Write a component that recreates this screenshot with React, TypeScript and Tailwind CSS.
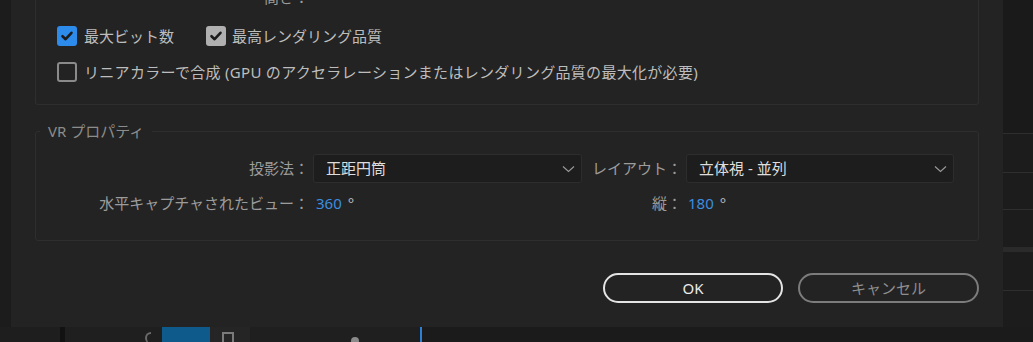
import React from "react"

const font = { fontFamily: '"Noto Sans", "Noto Sans CJK JP", sans-serif' }

function Check({ state }: { state: "blue" | "gray" | "off" }) {
  if (state === "off") {
    return <span className="h-[20px] w-[20px] rounded-[3px] border-2 border-[#8a8a8a]" />
  }
  return (
    <span
      className={`flex h-[20px] w-[20px] items-center justify-center rounded-[3px] ${
        state === "blue" ? "bg-[#2d8ceb]" : "bg-[#b0b0b0]"
      }`}
    >
      <svg width="14" height="14" viewBox="0 0 14 14">
        <path d="M2.5 7.2 L5.6 10.2 L11.5 3.8" fill="none" stroke="#1b1b1b" strokeWidth="2.6" strokeLinecap="round" strokeLinejoin="round" />
      </svg>
    </span>
  )
}

function Select({ value, width }: { value: string; width: string }) {
  return (
    <div className={`flex h-[29px] items-center justify-between rounded-[3px] border border-[#2d2d2d] bg-[#1d1d1d] pl-[12px] pr-[6px] text-[15px] text-[#dedede] ${width}`}>
      <span>{value}</span>
      <svg width="13" height="8" viewBox="0 0 13 8">
        <path d="M1 1.5 L6.5 6.5 L12 1.5" fill="none" stroke="#9a9a9a" strokeWidth="1.1" />
      </svg>
    </div>
  )
}

export default function App() {
  return (
    <div className="flex h-[342px] w-[1033px] flex-col overflow-hidden bg-[#1b1b1b]" style={font}>
      <div className="flex h-[327px]">
        <div className="w-[11px] bg-[#1c1c1c]" />

        {/* dialog */}
        <div className="flex w-[992px] flex-col overflow-hidden bg-[#232323] px-[24px]">
          <div className="-mt-[33px] rounded-b-[3px] border-x border-b border-[#2e2e2e] pb-[22px] pt-[20px]">
            <div className="flex h-[20px] text-[15px] leading-[20px] text-[#9c9c9c]">
              <span className="w-[277px] pr-[4px] text-right">高さ：</span>
            </div>
            <div className="mt-[19px] flex h-[20px] items-center pl-[21px] text-[15px] text-[#bdbdbd]">
              <Check state="blue" />
              <span className="ml-[7px]">最大ビット数</span>
              <span className="ml-[32px]" />
              <Check state="gray" />
              <span className="ml-[6px]">最高レンダリング品質</span>
            </div>
            <div className="mt-[16px] flex h-[20px] items-center pl-[21px] text-[15px] text-[#bdbdbd]">
              <Check state="off" />
              <span className="ml-[7px] tracking-[0.3px]">リニアカラーで合成 (GPU のアクセラレーションまたはレンダリング品質の最大化が必要)</span>
            </div>
          </div>

          <fieldset className="mt-[16px] rounded-[3px] border border-[#2e2e2e]">
            <legend className="ml-[4px] px-[8px] text-[15px] leading-[20px] text-[#8c8c8c]">VR プロパティ</legend>
            <div className="grid grid-cols-[277px_269px_104px_268px] gap-y-[10px] pb-[27px] pt-[13px] text-[15px]">
              <div className="flex items-center justify-end pr-[4px] text-[#9c9c9c]">投影法：</div>
              <Select value="正距円筒" width="w-[269px]" />
              <div className="flex items-center justify-end pr-[4px] text-[#9c9c9c]">レイアウト：</div>
              <Select value="立体視 - 並列" width="w-[268px]" />

              <div className="flex h-[20px] items-center justify-end pr-[4px] text-[#9c9c9c]">水平キャプチャされたビュー：</div>
              <div className="flex h-[20px] items-center pl-[3px]">
                <span className="text-[#3b8ee0]">360</span>
                <span className="ml-[6px] text-[#b8b8b8]">°</span>
              </div>
              <div className="flex h-[20px] items-center justify-end pr-[4px] text-[#9c9c9c]">縦：</div>
              <div className="flex h-[20px] items-center pl-[2px]">
                <span className="text-[#3b8ee0]">180</span>
                <span className="ml-[6px] text-[#b8b8b8]">°</span>
              </div>
            </div>
          </fieldset>

          <div className="mt-[32px] flex justify-end gap-[15px]">
            <button className="h-[30px] w-[180px] rounded-full border-2 border-[#e4e4e4] text-[15px] text-[#ececec]">OK</button>
            <button className="h-[30px] w-[181px] rounded-full border-2 border-[#7c7c7c] text-[15px] text-[#8e8e8e]">キャンセル</button>
          </div>
        </div>

        {/* right side panels */}
        <div className="flex w-[30px] flex-col bg-[#1c1c1c]">
          <div className="h-[133px] bg-[#1a1a1a]" />
          <div className="h-[39px] border-t border-[#2e2e2e]" />
          <div className="h-[37px] border-t border-[#2e2e2e]" />
          <div className="h-[38px] border-t border-[#2e2e2e]" />
          <div className="h-[5px] bg-[#2a2a2a]" />
          <div className="h-[38px]" />
          <div className="flex-1 border-t border-[#2e2e2e]" />
        </div>
      </div>

      {/* bottom strip */}
      <div className="flex h-[15px]">
        <div className="w-[60px] bg-[#1e1e1e]" />
        <div className="w-[5px] bg-[#121212]" />
        <div className="relative w-[97px] bg-[#1f1f1f]">
          <span className="absolute left-[80px] top-[5px] h-[12px] w-[6px] rounded-l-full border-l-2 border-t-2 border-[#6a6a6a]" />
        </div>
        <div className="w-[48px] bg-[#0e5a8b]" />
        <div className="relative w-[40px] bg-[#252525]">
          <span className="absolute left-[12px] top-[5px] h-[12px] w-[12px] border-2 border-[#7a7a7a]" />
        </div>
        <div className="relative w-[170px] bg-[#1f1f1f]">
          <span className="absolute left-[101px] top-[10px] h-[8px] w-[8px] rounded-full bg-[#8a8a8a]" />
        </div>
        <div className="w-[2px] bg-[#2b7fd4]" />
        <div className="flex-1 bg-[#1b1b1b]" />
      </div>
    </div>
  )
}
